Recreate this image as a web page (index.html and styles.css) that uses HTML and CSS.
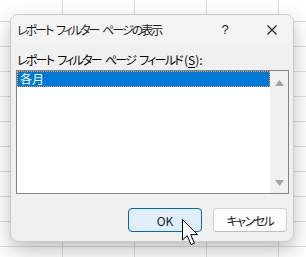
FILE: index.html
```html
<!DOCTYPE html>
<html lang="ja">
<head>
    <meta charset="UTF-8">
    <title>レポート フィルター ページの表示</title>
    <link rel="stylesheet" href="styles.css">
</head>
<body>
    <div class="dialog">
        <div class="titlebar">
            <span class="title">レポート フィルター ページの表示</span>
            <span class="help">?</span>
            <span class="close">
                <svg width="10" height="10" viewBox="0 0 10 10">
                    <path d="M0.5 0.5 L9.5 9.5 M9.5 0.5 L0.5 9.5" stroke="#1b1b1b" stroke-width="1.1" fill="none"/>
                </svg>
            </span>
        </div>

        <div class="content">
            <div class="field-label">レポート フィルター ページ フィールド<span class="mnemonic">(<u>S</u>):</span></div>

            <div class="listbox">
                <div class="list-items">
                    <div class="list-item selected">各月</div>
                </div>
                <div class="scrollbar">
                    <svg width="9" height="6" viewBox="0 0 9 6"><path d="M4.5 0 L9 6 L0 6 Z" fill="#a3a3a3"/></svg>
                    <svg width="9" height="6" viewBox="0 0 9 6"><path d="M0 0 L9 0 L4.5 6 Z" fill="#a3a3a3"/></svg>
                </div>
            </div>

            <div class="buttons">
                <button class="btn btn-default">OK</button>
                <button class="btn btn-kana">キャンセル</button>
            </div>
        </div>
    </div>

    <!-- mouse pointer over the OK button -->
    <svg class="pointer" width="18" height="28" viewBox="0 0 18 28">
        <path d="M0.5 0.5 V21 L5.2 16.6 L9 25.6 L12.4 24.2 L8.7 15.6 H15.5 Z" fill="#fff" stroke="#000" stroke-width="1" stroke-linejoin="miter"/>
    </svg>
</body>
</html>
```

FILE: styles.css
```css
* {
    box-sizing: border-box;
}
body {
    margin: 0;
    width: 306px;
    height: 257px;
    overflow: hidden;
    font-family: "Noto Sans CJK JP", "Noto Sans", sans-serif;
    font-feature-settings: "palt";
    font-size: 12px;
    color: #1b1b1b;
    background-color: #fff;
    background-image:
        linear-gradient(#dcdcdc 1px, transparent 1px),
        linear-gradient(90deg, #dcdcdc 1px, transparent 1px);
    background-size: 100% 25px, 72px 100%;
    background-position: 0 21px, 62px 0;
    position: relative;
    padding: 14px 0 0 10px;
}
.dialog {
    width: 284px;
    height: 228px;
    background-color: #f0f0f0;
    border: 1px solid #c9c9c9;
    border-radius: 8px;
    box-shadow: 0 8px 20px rgba(0, 0, 0, 0.26);
    overflow: hidden;
}
.titlebar {
    height: 29px;
    display: flex;
    align-items: center;
    background-color: #f3f3f3;
    padding-left: 6px;
}
.title {
    flex: 1;
    line-height: 16px;
    padding-top: 1px;
    letter-spacing: -2px;
    word-spacing: 3px;
}
.help {
    width: 16px;
    margin-right: 34px;
    font-family: "Segoe UI", "Liberation Sans", sans-serif;
    font-size: 13px;
    text-align: center;
}
.close {
    width: 10px;
    height: 10px;
    margin-right: 16px;
    display: flex;
}
.content {
    padding: 8px 4px 0 5px;
}
.field-label {
    line-height: 16px;
    padding-left: 1px;
    color: #000;
    letter-spacing: -1.75px;
    word-spacing: 3px;
}
.mnemonic {
    letter-spacing: 0;
    margin-left: 2px;
}
.mnemonic u {
    text-underline-offset: 2px;
}
.listbox {
    margin-top: 2px;
    height: 124px;
    display: flex;
    border: 1px solid #858585;
    background-color: #fff;
}
.list-items {
    flex: 1;
}
.list-item {
    height: 16px;
    line-height: 14px;
    padding-left: 2px;
}
.list-item.selected {
    background-color: #0078d7;
    color: #fff;
    border: 1px dotted #ff9a3a;
}
.scrollbar {
    width: 18px;
    background-color: #f0f0f0;
    display: flex;
    flex-direction: column;
    justify-content: space-between;
    align-items: center;
    padding: 9px 0 7px 1px;
}
.scrollbar svg {
    display: block;
}
.buttons {
    display: flex;
    justify-content: flex-end;
    gap: 11px;
    margin-top: 14px;
    padding-right: 2px;
}
.btn {
    width: 74px;
    height: 24px;
    font-family: inherit;
    font-feature-settings: "palt";
    font-size: 12px;
    color: #1b1b1b;
    background-color: #fdfdfd;
    border: 1px solid #d0d0d0;
    border-bottom-color: #bdbdbd;
    border-radius: 4px;
    padding: 0;
}
.btn-kana {
    letter-spacing: -1.5px;
}
.btn-default {
    background-color: #e0eef9;
    border: 1px solid #0067c0;
}
.pointer {
    position: absolute;
    left: 182px;
    top: 219px;
}
```
